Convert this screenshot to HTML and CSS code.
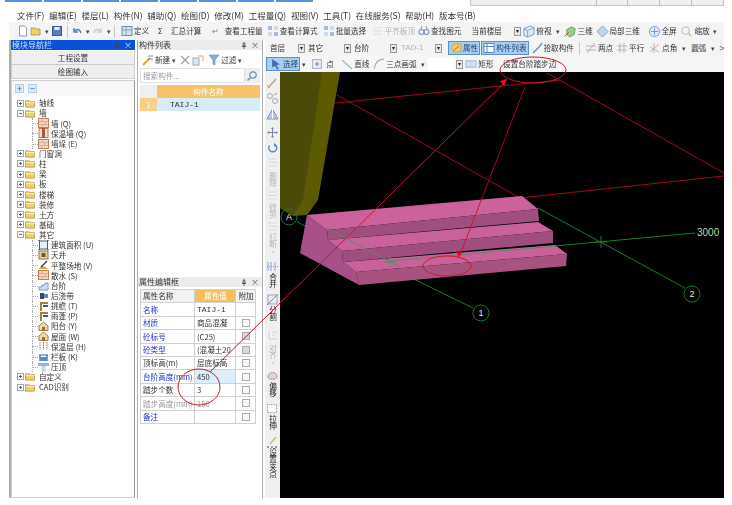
FILE: index.html
```html
<!DOCTYPE html>
<html lang="zh">
<head>
<meta charset="utf-8">
<title>台阶</title>
<link rel="stylesheet" href="styles.css">
</head>
<body>
<svg class="defs" width="0" height="0">
  <symbol id="folder" viewBox="0 0 11 9"><path d="M.5 8.500V1.500h4l1 1h5v6z" fill="#f0cf68" stroke="#9a8440" stroke-width=".7"/><path d="M1 3.500h9.500" stroke="#fff3c0"/></symbol>
  <symbol id="plus" viewBox="0 0 7 7"><rect x=".5" y=".5" width="6" height="6" fill="#fff" stroke="#9aa"/><path d="M2 3.500h3M3.500 2v3" stroke="#666"/></symbol>
  <symbol id="minus" viewBox="0 0 7 7"><rect x=".5" y=".5" width="6" height="6" fill="#fff" stroke="#9aa"/><path d="M2 3.500h3" stroke="#666"/></symbol>
  <symbol id="pin" viewBox="0 0 7 8"><path d="M1 5h5M2.500 1h2v4h-2zM3.500 5v3" fill="none" stroke="#444"/></symbol>
  <symbol id="wall" viewBox="0 0 11 10"><rect x=".5" y=".5" width="10" height="9" fill="#f4d6c0" stroke="#b9825c"/><path d="M1 3.500h9M1 6.500h9M4 1v2M7 4v2M4 7v2" stroke="#d39a78" stroke-width=".7"/></symbol>
  <symbol id="dwall" viewBox="0 0 11 10"><rect x="1" y=".5" width="9" height="9" fill="#f4dccb" stroke="#b9825c"/><rect x="4" y="0" width="3" height="10" fill="#b8563c"/></symbol>
  <symbol id="house" viewBox="0 0 11 10"><path d="M1 5L5.500 1 10 5v4.500H1z" fill="#f2d9a8" stroke="#a07b48"/><path d="M4 9V6h3v3" fill="#8d6c3f"/></symbol>
  <symbol id="eave" viewBox="0 0 11 10"><path d="M3 10V2h7" fill="none" stroke="#a87a48" stroke-width="2"/><path d="M5 4h5v2H5z" fill="#555"/></symbol>
  <symbol id="area" viewBox="0 0 11 10"><rect x="1.500" y="1" width="8" height="8" fill="#e8eef8" stroke="#4a5a78"/><path d="M0 0h2M9 0h2M0 10h2M9 10h2" stroke="#111"/></symbol>
  <symbol id="well" viewBox="0 0 11 10"><rect x="1" y="1" width="9" height="8" fill="#e4d2a8" stroke="#8a7748"/><rect x="3.500" y="3" width="4" height="4" fill="#6b5a2a"/></symbol>
  <symbol id="flat" viewBox="0 0 11 10"><path d="M0 9l5-3 6 3z" fill="#d8a838"/><path d="M3 7l6-6" stroke="#333" stroke-width="1.200"/></symbol>
  <symbol id="stairs" viewBox="0 0 11 10"><path d="M1 9V6h3V4h3V2h3v7z" fill="#cfe0f4" stroke="#6a88b8" stroke-width=".8"/></symbol>
  <symbol id="belt" viewBox="0 0 11 10"><rect x="2" y="2" width="4" height="6" fill="#445"/><rect x="6" y="3" width="4" height="4" fill="#5a88c8"/></symbol>
  <symbol id="rail" viewBox="0 0 11 10"><path d="M1 3h9M2 3v6M9 3v6" stroke="#2c66b0" stroke-width="1.200" fill="none"/><rect x="2" y="5" width="7" height="4" fill="#5c8cc8"/></symbol>
  <symbol id="press" viewBox="0 0 11 10"><rect x="0" y="1" width="11" height="3" fill="#8fb4de"/><rect x="3.500" y="4" width="4" height="6" fill="#c4d8ee"/></symbol>
  <symbol id="hatch" viewBox="0 0 11 10"><path d="M2 1v8M5.500 1v8M9 1v8" stroke="#b06a3a" stroke-dasharray="1.500 1"/></symbol>
  <symbol id="doc" viewBox="0 0 12 12"><path d="M2.500 1h5l2 2v8h-7z" fill="#fff" stroke="#8f9bb0"/></symbol>
  <symbol id="open" viewBox="0 0 12 12"><path d="M1 10V3h4l1 1h4v6z" fill="#eed070" stroke="#a58a3a" stroke-width=".7"/></symbol>
  <symbol id="save" viewBox="0 0 12 12"><rect x="1.500" y="1.500" width="9" height="9" fill="#5a7ec4" stroke="#3b5a98"/><rect x="3.500" y="2" width="5" height="3" fill="#e8eef8"/></symbol>
  <symbol id="undo" viewBox="0 0 12 12"><path d="M3 3v4h4M3 7c2-4 6-3 7 1" fill="none" stroke="#4f7fc8" stroke-width="1.400"/></symbol>
  <symbol id="redo" viewBox="0 0 12 12"><path d="M9 3v4H5M9 7C7 3 3 4 2 8" fill="none" stroke="#c8ccd4" stroke-width="1.400"/></symbol>
  <symbol id="def" viewBox="0 0 12 12"><rect x="1" y="1.500" width="10" height="9" fill="#cfe0f2" stroke="#6f8fb8"/><path d="M1 5h10M5 1.500v9" stroke="#6f8fb8" stroke-width=".7"/></symbol>
  <symbol id="calc" viewBox="0 0 12 12"><rect x="1" y="1" width="4" height="4" fill="#a4bcdc"/><rect x="7" y="1" width="4" height="4" fill="#d0dae6"/><rect x="1" y="7" width="4" height="4" fill="#d0dae6"/><rect x="7" y="7" width="4" height="4" fill="#a4bcdc"/></symbol>
  <symbol id="find" viewBox="0 0 12 12"><circle cx="3.500" cy="7" r="2.500" fill="none" stroke="#6f92c4" stroke-width="1.100"/><circle cx="8.500" cy="7" r="2.500" fill="none" stroke="#6f92c4" stroke-width="1.100"/><path d="M3 4l1-3M9 4L8 1" stroke="#999"/></symbol>
  <symbol id="box" viewBox="0 0 14 14"><path d="M2 4l7-3 4 2v7l-7 3-4-2z" fill="#dbe8f6" stroke="#6f94c6"/><path d="M2 4l4 2v7M6 6l7-3" fill="none" stroke="#6f94c6" stroke-width=".8"/></symbol>
  <symbol id="cube" viewBox="0 0 14 14"><path d="M3 5l5-3 4 2-1 6-5 3-3-3z" fill="#9ccf8c" stroke="#5fa05f"/><path d="M1 12l4-4" stroke="#c83a3a"/></symbol>
  <symbol id="gem" viewBox="0 0 14 14"><path d="M7 1l6 6-6 6-6-6z" fill="#c0d4ec" stroke="#7f9fca"/></symbol>
  <symbol id="globe" viewBox="0 0 14 14"><circle cx="7" cy="7" r="5.500" fill="#e0eaf8" stroke="#7396c8"/><path d="M7 3v8M3 7h8" stroke="#7396c8"/></symbol>
  <symbol id="zoom" viewBox="0 0 14 14"><circle cx="6" cy="6" r="4" fill="none" stroke="#b4c8e0" stroke-width="1.300"/><path d="M9 9l3 3" stroke="#dcb458" stroke-width="1.500"/></symbol>
  <symbol id="prop" viewBox="0 0 12 12"><path d="M1 6l3-4h7v8H4z" fill="#f0d060" stroke="#b99a30" stroke-width=".7"/><path d="M3 9l6-5" stroke="#d0602a"/></symbol>
  <symbol id="list" viewBox="0 0 12 12"><rect x="1" y="1.500" width="10" height="9" fill="#fff" stroke="#5c86be"/><path d="M1 4.500h10M4 2v8" stroke="#5c86be"/></symbol>
  <symbol id="pick" viewBox="0 0 12 12"><path d="M2 11l7-7 2-3" stroke="#7396c8" stroke-width="1.600" fill="none"/></symbol>
  <symbol id="two" viewBox="0 0 12 12"><path d="M2 11L10 1M1 4h10M1 8h10" stroke="#c8aaaa" fill="none"/></symbol>
  <symbol id="para" viewBox="0 0 12 12"><path d="M1 4h10M1 8h10M4 1v10M8 1v10" stroke="#d8aaaa" fill="none"/></symbol>
  <symbol id="angle" viewBox="0 0 12 12"><path d="M1 10L10 2M1 5l9 5M5 1v10" stroke="#c8aabc" fill="none"/></symbol>
  <symbol id="sel" viewBox="0 0 11 11"><path d="M2 1l7 5-3 .5 2 3.500-1.500 .5-2-3.500L2 9z" fill="#3a6ab0"/></symbol>
  <symbol id="pt" viewBox="0 0 11 11"><rect x="1.500" y="1.500" width="8" height="8" fill="#eef2f8" stroke="#aab2c0"/><rect x="4" y="4" width="3" height="3" fill="#8aa0c4"/></symbol>
  <symbol id="ln" viewBox="0 0 11 11"><path d="M1 2l9 8" stroke="#90a6c6"/></symbol>
  <symbol id="arc" viewBox="0 0 11 11"><path d="M1 10C2 4 5 1 10 1" fill="none" stroke="#cc9a9a"/></symbol>
  <symbol id="rect" viewBox="0 0 13 11"><rect x="1" y="2" width="11" height="7" fill="#d0e0f4" stroke="#9ab6da"/></symbol>
  <symbol id="newi" viewBox="0 0 12 12"><path d="M1 11l7-7" stroke="#d9a93a" stroke-width="2"/><path d="M6 2h5M6 5h5" stroke="#88a"/></symbol>
  <symbol id="cross" viewBox="0 0 12 12"><path d="M2 2l8 8M10 2l-8 8" stroke="#9aa0a8" stroke-width="1.200"/></symbol>
  <symbol id="copy" viewBox="0 0 12 12"><rect x="1" y="4" width="6" height="7" fill="#dde6f2" stroke="#9ab"/><path d="M6 2h5v5" fill="none" stroke="#e0a878"/></symbol>
  <symbol id="funnel" viewBox="0 0 12 12"><path d="M1 1h10L7 6v5L5 10V6z" fill="#7fb2e0" stroke="#5c92c8" stroke-width=".6"/></symbol>
  <symbol id="search" viewBox="0 0 12 12"><circle cx="7" cy="5" r="3.200" fill="none" stroke="#5f96c4" stroke-width="1.200"/><path d="M4.500 7.500L1.500 10.500" stroke="#5f96c4" stroke-width="1.400"/></symbol>
  <symbol id="v1" viewBox="0 0 13 13"><path d="M2 11L10 2" stroke="#a8ac94" stroke-width="1.600"/><path d="M1 8l3 3" stroke="#c8a860"/></symbol>
  <symbol id="v2" viewBox="0 0 13 13"><circle cx="4" cy="4" r="2.500" fill="none" stroke="#a0aaba"/><circle cx="9" cy="9" r="2.500" fill="none" stroke="#a0aaba"/><path d="M8 3l3-2" stroke="#b08080"/></symbol>
  <symbol id="v3" viewBox="0 0 13 13"><path d="M6.500 1L12 11H1z" fill="#b8c8e0" stroke="#7c94ba"/><path d="M6.500 1v10" stroke="#fff"/></symbol>
  <symbol id="v4" viewBox="0 0 13 13"><path d="M6.500 2v9M2 6.500h9" stroke="#7388a6"/><path d="M6.500 1l-1.500 2h3zM6.500 12l-1.500-2h3zM1 6.500l2-1.500v3zM12 6.500l-2-1.500v3z" fill="#7388a6"/></symbol>
  <symbol id="v5" viewBox="0 0 13 13"><path d="M3.500 4.500a4 4 0 1 0 5.500-1" fill="none" stroke="#5c88c4" stroke-width="1.400"/><path d="M8 1.500v4h3z" fill="#5c88c4"/></symbol>
  <symbol id="v6" viewBox="0 0 13 13"><path d="M2 3h9M2 6.500h9M2 10h9" stroke="#d8dadc"/></symbol>
  <symbol id="v7" viewBox="0 0 13 13"><path d="M2 2v9M5 2v9M9 2v9" stroke="#86a4cc"/><path d="M1 6.500h11" stroke="#86a4cc" stroke-dasharray="1 1"/></symbol>
  <symbol id="v8" viewBox="0 0 13 13"><rect x="2" y="2" width="9" height="9" fill="#eaeff7" stroke="#93a3c6"/><path d="M1 12L12 1" stroke="#a08090"/></symbol>
  <symbol id="v9" viewBox="0 0 13 13"><path d="M3 2v9h8M6 4h5M6 7h3" stroke="#cfd2d6" fill="none"/></symbol>
  <symbol id="v10" viewBox="0 0 13 13"><path d="M2 8a4.500 4.500 0 1 1 9 0c0 3-9 3-9 0z" fill="#e2d4de" stroke="#b090a4"/></symbol>
  <symbol id="v11" viewBox="0 0 13 13"><rect x="1.500" y="2.500" width="9" height="8" fill="#fff" stroke="#a0aaba" stroke-dasharray="2 1"/></symbol>
  <symbol id="v12" viewBox="0 0 13 13"><path d="M4 9L10 2" stroke="#d9b87a" stroke-width="1.600"/><path d="M1 12h2M5 12h2M9 12h2" stroke="#444"/></symbol>
</svg>

<div class="linkstrip">
  <div class="links"><i></i><i></i><i></i><i></i><i></i><i></i><i></i><i></i></div>
  <div class="tabs"><span class="tab-wide"></span><span></span><span></span><span></span><span></span></div>
</div>

<div class="app">
  <nav class="menubar">
    <span>文件(F)</span><span>编辑(E)</span><span>楼层(L)</span><span>构件(N)</span><span>辅助(Q)</span><span>绘图(D)</span><span>修改(M)</span><span>工程量(Q)</span><span>视图(V)</span><span>工具(T)</span><span>在线服务(S)</span><span>帮助(H)</span><span>版本号(B)</span>
  </nav>

  <div class="toolbar tb1">
    <svg class="ic"><use href="#doc"/></svg>
    <svg class="ic"><use href="#open"/></svg><b class="drop">▾</b>
    <svg class="ic"><use href="#save"/></svg>
    <u class="sep sep-a"></u>
    <svg class="ic"><use href="#undo"/></svg><b class="drop">▾</b>
    <svg class="ic"><use href="#redo"/></svg><b class="drop">▾</b>
    <u class="sep sep-b"></u>
    <svg class="ic"><use href="#def"/></svg><span>定义</span>
    <span class="t-sum"><em class="lead">Σ</em>汇总计算</span>
    <span class="t-view"><em class="lead back">↵</em>查看工程量</span>
    <svg class="ic t-a"><use href="#calc"/></svg><span>查看计算式</span>
    <svg class="ic t-b"><use href="#calc"/></svg><span>批量选择</span>
    <svg class="ic t-c"><use href="#v6"/></svg><span class="off">平齐板顶</span>
    <svg class="ic t-d"><use href="#find"/></svg><span>查找图元</span>
    <span class="t-floor">当前楼层</span><span class="sel-btn t-e">▾</span>
    <svg class="ic14 t-h"><use href="#box"/></svg><span>俯视</span><b class="drop d-a">▾</b>
    <svg class="ic14 t-i"><use href="#cube"/></svg><span>三维</span>
    <svg class="ic14 t-j"><use href="#gem"/></svg><span>局部三维</span>
    <svg class="ic14 t-k"><use href="#globe"/></svg><span>全屏</span>
    <svg class="ic14 t-l"><use href="#zoom"/></svg><span>缩放</span><b class="drop d-b">▾</b>
  </div>

  <div class="workspace">
    <aside class="nav-panel">
      <header class="panel-title active"><span>模块导航栏</span><span class="pin"><svg class="pin-ic"><use href="#pin"/></svg>×</span></header>
      <div class="nav-btn first">工程设置</div>
      <div class="nav-btn">绘图输入</div>
      <div class="treebox">
        <div class="treetools"><span class="tt">+</span><span class="tt">−</span></div>
        <ul class="tree">
          <li><svg class="ex"><use href="#plus"/></svg><svg class="fd"><use href="#folder"/></svg>轴线</li>
          <li><svg class="ex"><use href="#minus"/></svg><svg class="fd"><use href="#folder"/></svg>墙</li>
          <li class="leaf"><svg class="lf"><use href="#wall"/></svg>墙 (Q)</li>
          <li class="leaf"><svg class="lf"><use href="#dwall"/></svg>保温墙 (Q)</li>
          <li class="leaf"><svg class="lf"><use href="#wall"/></svg>墙垛 (E)</li>
          <li><svg class="ex"><use href="#plus"/></svg><svg class="fd"><use href="#folder"/></svg>门窗洞</li>
          <li><svg class="ex"><use href="#plus"/></svg><svg class="fd"><use href="#folder"/></svg>柱</li>
          <li><svg class="ex"><use href="#plus"/></svg><svg class="fd"><use href="#folder"/></svg>梁</li>
          <li><svg class="ex"><use href="#plus"/></svg><svg class="fd"><use href="#folder"/></svg>板</li>
          <li><svg class="ex"><use href="#plus"/></svg><svg class="fd"><use href="#folder"/></svg>楼梯</li>
          <li><svg class="ex"><use href="#plus"/></svg><svg class="fd"><use href="#folder"/></svg>装修</li>
          <li><svg class="ex"><use href="#plus"/></svg><svg class="fd"><use href="#folder"/></svg>土方</li>
          <li><svg class="ex"><use href="#plus"/></svg><svg class="fd"><use href="#folder"/></svg>基础</li>
          <li><svg class="ex"><use href="#minus"/></svg><svg class="fd"><use href="#folder"/></svg>其它</li>
          <li class="leaf"><svg class="lf"><use href="#area"/></svg>建筑面积 (U)</li>
          <li class="leaf"><svg class="lf"><use href="#well"/></svg>天井</li>
          <li class="leaf"><svg class="lf"><use href="#flat"/></svg>平整场地 (V)</li>
          <li class="leaf"><svg class="lf"><use href="#wall"/></svg>散水 (S)</li>
          <li class="leaf"><svg class="lf"><use href="#stairs"/></svg>台阶</li>
          <li class="leaf"><svg class="lf"><use href="#belt"/></svg>后浇带</li>
          <li class="leaf"><svg class="lf"><use href="#eave"/></svg>挑檐 (T)</li>
          <li class="leaf"><svg class="lf"><use href="#eave"/></svg>雨蓬 (P)</li>
          <li class="leaf"><svg class="lf"><use href="#house"/></svg>阳台 (Y)</li>
          <li class="leaf"><svg class="lf"><use href="#house"/></svg>屋面 (W)</li>
          <li class="leaf"><svg class="lf"><use href="#hatch"/></svg>保温层 (H)</li>
          <li class="leaf"><svg class="lf"><use href="#rail"/></svg>栏板 (K)</li>
          <li class="leaf"><svg class="lf"><use href="#press"/></svg>压顶</li>
          <li><svg class="ex"><use href="#plus"/></svg><svg class="fd"><use href="#folder"/></svg>自定义</li>
          <li><svg class="ex"><use href="#plus"/></svg><svg class="fd"><use href="#folder"/></svg>CAD识别</li>
        </ul>
      </div>
    </aside>

    <section class="mid">
      <div class="list-panel">
        <header class="panel-title"><span>构件列表</span><span class="pin"><svg class="pin-ic"><use href="#pin"/></svg>×</span></header>
        <div class="list-tools">
          <svg class="ic"><use href="#newi"/></svg><span>新建</span><b class="drop">▾</b>
          <svg class="ic l-a"><use href="#cross"/></svg>
          <svg class="ic"><use href="#copy"/></svg>
          <svg class="ic l-b"><use href="#funnel"/></svg><span>过滤</span><b class="drop">▾</b>
        </div>
        <div class="searchbar"><span class="search-input">搜索构件...</span><span class="search-go"><svg class="ic"><use href="#search"/></svg></span></div>
        <div class="comp-head"><span class="idx"></span><span class="name">构件名称</span></div>
        <div class="comp-row"><span class="idx">1</span><span class="name mono">TAIJ-1</span></div>
      </div>
      <div class="prop-panel">
        <header class="panel-title"><span>属性编辑框</span><span class="pin"><svg class="pin-ic"><use href="#pin"/></svg>×</span></header>
        <table class="props">
          <tr><th>属性名称</th><th class="hl">属性值</th><th>附加</th></tr>
          <tr><td class="blue">名称</td><td class="mono">TAIJ-1</td><td></td></tr>
          <tr><td class="blue">材质</td><td>商品混凝</td><td><i class="cb"></i></td></tr>
          <tr><td class="blue">砼标号</td><td>(C25)</td><td><i class="cb on"></i></td></tr>
          <tr><td class="blue">砼类型</td><td>(混凝土20</td><td><i class="cb on"></i></td></tr>
          <tr><td>顶标高(m)</td><td>层底标高</td><td><i class="cb"></i></td></tr>
          <tr class="cur"><td class="blue">台阶高度(mm)</td><td>450</td><td><i class="cb"></i></td></tr>
          <tr><td>踏步个数</td><td>3</td><td><i class="cb"></i></td></tr>
          <tr class="dim"><td>踏步高度(mm)</td><td>150</td><td><i class="cb"></i></td></tr>
          <tr><td class="blue">备注</td><td></td><td><i class="cb"></i></td></tr>
        </table>
      </div>
    </section>

    <section class="main">
      <div class="toolbar tb2">
        <span>首层</span><span class="sel-btn s-a">▾</span>
        <span class="s-gap">其它</span><span class="sel-btn s-b">▾</span>
        <span class="s-gap">台阶</span><span class="sel-btn s-b">▾</span>
        <span class="s-tad off">TAD-1</span><span class="sel-btn s-d">▾</span>
        <span class="pressed"><svg class="ic"><use href="#prop"/></svg>属性</span>
        <span class="pressed s-p"><svg class="ic"><use href="#list"/></svg>构件列表</span>
        <svg class="ic s-e"><use href="#pick"/></svg><span>拾取构件</span>
        <u class="sep s-f"></u>
        <svg class="ic"><use href="#two"/></svg><span>两点</span>
        <svg class="ic s-g"><use href="#para"/></svg><span>平行</span>
        <svg class="ic s-i"><use href="#angle"/></svg><span>点角</span><b class="drop s-j">▾</b>
        <span class="s-j">圆弧</span><b class="drop s-j">▾</b>
        <span class="more">&gt;</span>
      </div>
      <div class="toolbar tb3">
        <span class="pressed p-sel"><svg class="ic"><use href="#sel"/></svg>选择</span><b class="drop">▾</b>
        <svg class="ic r-a"><use href="#pt"/></svg><span>点</span>
        <svg class="ic r-b"><use href="#ln"/></svg><span>直线</span>
        <svg class="ic r-c"><use href="#arc"/></svg><span>三点画弧</span><b class="drop d-c">▾</b>
        <span class="blank"></span><span class="sel-btn r-s">▾</span>
        <svg class="ic r-d"><use href="#rect"/></svg><span>矩形</span>
        <span class="r-e">设置台阶踏步边</span>
      </div>
      <div class="stage">
        <div class="vtools">
          <svg class="vi"><use href="#v1"/></svg>
          <svg class="vi mt2"><use href="#v2"/></svg>
          <svg class="vi mt3"><use href="#v3"/></svg>
          <svg class="vi mt5"><use href="#v4"/></svg>
          <svg class="vi mt2"><use href="#v5"/></svg>
          <svg class="vi mt2"><use href="#v6"/></svg><span class="vt off mt3">删除</span>
          <svg class="vi mt2"><use href="#v6"/></svg><span class="vt off mt1">修剪</span>
          <svg class="vi mt2"><use href="#v6"/></svg><span class="vt off">打断·</span>
          <svg class="vi mt4"><use href="#v7"/></svg><span class="vt">合并</span>
          <svg class="vi mt5"><use href="#v8"/></svg><span class="vt">分割</span>
          <svg class="vi mt6"><use href="#v9"/></svg><span class="vt off mt3">对齐·</span>
          <svg class="vi mt3"><use href="#v10"/></svg><span class="vt">偏移</span>
          <svg class="vi mt4"><use href="#v11"/></svg><span class="vt">拉伸</span>
          <svg class="vi mt5"><use href="#v12"/></svg><span class="vt">设置夹点</span>
        </div>
        <svg class="canvas" viewBox="280 72 444 426" preserveAspectRatio="none">
          <rect x="280" y="72" width="444" height="426" fill="#000"/>
          <polygon points="280,72 340,72 318,200 307,215 293,216 280,208" fill="#5c5a02"/>
          <polygon points="280,72 322,72 303,200 293,216 280,208" fill="#4c4a08"/>
          <g fill="none" stroke="#1d7a2a">
            <path d="M297 222L473 308M538 208L685 288M555 246L695 233M601 236v12M595 242h12"/>
            <circle cx="289" cy="217" r="8"/><circle cx="481" cy="313" r="8"/><circle cx="692" cy="294" r="8"/>
          </g>
          <path d="M337 95L520 198L724 176M335 103L560 80M547 73L724 173M525 87L482 198" stroke="#a80818" fill="none"/>
          <polygon points="307,215 300,253 359,285 356,272 343,262 342,251 328,240 327,230" fill="#a85088"/>
          <polygon points="307,215 522,196 538,209 327,230" fill="#cb629c"/>
          <polygon points="327,230 538,209 539,221 328,240" fill="#a04e7e"/>
          <polygon points="328,240 538,222 553,231 342,251" fill="#c9619a"/>
          <polygon points="342,251 553,231 553,243 343,262" fill="#a04e7e"/>
          <polygon points="343,262 555,245 567,254 356,272" fill="#c9619a"/>
          <polygon points="356,272 567,254 566,266 359,285" fill="#a8527f"/>
          <path d="M327 228L400 267M390 261L556 246M390 256v12M384 262h12" stroke="#5f8a68" fill="none"/>
          <g fill="#e8e8e8" font-family="'Liberation Sans',sans-serif" font-size="9" text-anchor="middle">
            <text x="289" y="220">A</text><text x="481" y="316">1</text><text x="692" y="297">2</text>
          </g>
          <text x="697" y="236" fill="#bcd8a0" font-size="10" font-family="'Liberation Sans',sans-serif">3000</text>
        </svg>
      </div>
    </section>
  </div>
</div>

<svg class="notes" viewBox="0 0 732 505">
  <g fill="none" stroke="#cc1828">
    <ellipse cx="533" cy="70" rx="33" ry="13"/>
    <ellipse cx="447" cy="266" rx="24" ry="10"/>
    <ellipse cx="199" cy="387" rx="21" ry="18"/>
    <path d="M210 372L505 82M482 198L460 255"/>
  </g>
  <path d="M507 79l-7 2 4 5zM459 258l-3-6 6 1z" fill="#f01020"/>
</svg>
</body>
</html>
```
FILE: styles.css
```css
* { box-sizing: border-box; }
html, body { margin: 0; padding: 0; }
body {
  width: 732px;
  height: 505px;
  overflow: hidden;
  position: relative;
  background: #fff;
  color: #333;
  font: 7.6px/1 "Noto Sans CJK SC", "Liberation Sans", sans-serif;
}
.defs { position: absolute; }
ul { list-style: none; margin: 0; padding: 0; }
em { font-style: normal; }
b { font-weight: normal; }
u { text-decoration: none; }

.linkstrip { height: 8px; display: flex; justify-content: space-between; padding: 0 8px 0 5px; }
.links { display: flex; gap: 2px; height: 2px; width: 308px; }
.links i { flex: 1; background: #5a8fe0; }
.tabs { display: flex; width: 254px; height: 6px; background: #efefef; border: 1px solid #c4c4c4; border-top: 0; }
.tabs span { width: 32px; border-left: 1px solid #c4c4c4; }
.tabs .tab-wide { width: 125px; border-left: 0; }

.app { width: 724px; height: 490px; display: flex; flex-direction: column; filter: blur(.35px); }
.menubar { height: 14px; padding-left: 17px; display: flex; align-items: center; gap: 4.7px; white-space: nowrap; font-size: 8.5px; }

.toolbar { display: flex; align-items: center; white-space: nowrap; background: #f4f4f4; overflow: hidden; }
.toolbar > span, .toolbar > b { flex: none; }
.tb1 { height: 18px; margin-left: 9px; padding-left: 8px; }
.tb2, .tb3 { height: 16px; }
.tb2 { padding-left: 5px; }
.tb3 { padding-left: 1px; background: #f6f6f6; }
.ic { width: 12px; height: 12px; flex: none; margin-right: 1px; }
.ic14 { width: 13px; height: 13px; flex: none; margin-right: 1px; }
.drop { color: #444; font-size: 7px; width: 8px; text-align: center; flex: none; }
.sep { width: 1px; height: 13px; background: #c8c8c8; flex: none; }
.sep-a { margin: 0 3px; }
.sep-b { margin: 0 6px 0 1px; }
.off { color: #b4b4b4; }
.lead { display: inline-block; width: 13px; }
.back { color: #6a7f9a; }
.t-sum { margin-left: 8.8px; }
.t-view { margin-left: 10.4px; }
.t-a { margin-left: 4px; }
.t-b { margin-left: 5px; }
.t-c { margin-left: 5.6px; }
.t-d { margin-left: 3px; }
.t-floor { margin-left: 10.2px; }
.t-e { margin-left: 12.4px; }
.t-h { margin-left: 1px; }
.d-a { margin-left: 2px; }
.t-i { margin-left: 2px; }
.t-j { margin-left: 2.8px; }
.t-k { margin-left: 7.6px; }
.t-l { margin-left: 3.8px; }
.d-b { margin-left: 1px; }
.sel-btn {
  width: 7px; height: 9px; flex: none;
  border: 1px solid #999; background: #e8e8e8;
  font-size: 6px; line-height: 6px; text-align: center; color: #222;
}

.workspace { flex: 1; display: flex; min-height: 0; padding-left: 9px; }
.panel-title {
  height: 10px; display: flex; justify-content: space-between; align-items: center;
  background: #ececec; padding: 0 3px 0 1px; flex: none; font-size: 8px;
}
.panel-title.active { background: #0b50d8; color: #cfe0ff; }
.pin { display: flex; align-items: center; gap: 4px; color: #555; }
.pin-ic { width: 6px; height: 7px; }
.active .pin { color: #cfe0ff; }

.nav-panel { width: 126px; border-left: 2px solid #aeaeae; display: flex; flex-direction: column; }
.nav-btn {
  height: 14px; display: flex; align-items: center; justify-content: center;
  background: #efefef; border: 1px solid #cdcdcd; border-top: 0;
}
.nav-btn.first { margin-top: 1px; }
.treebox { flex: 1; margin-top: 1px; border: 1px solid #cfcfcf; border-right-color: #999; min-height: 0; }
.treetools { height: 15px; display: flex; gap: 4px; padding: 3px 0 0 3px; background: #f7f7f7; }
.tt {
  width: 9px; height: 9px; display: flex; align-items: center; justify-content: center;
  background: #dbe8f7; color: #2f69b2; border: 1px solid #b9cfe8; font-size: 9px;
}
.tree { padding-top: 2px; }
.tree li { height: 10.15px; display: flex; align-items: center; padding-left: 5px; white-space: nowrap; }
.tree .leaf { padding-left: 26px; position: relative; }
.tree .leaf::before { content: ""; position: absolute; left: 20px; top: 0; bottom: 0; border-left: 1px dotted #aaa; }
.tree .leaf::after { content: ""; position: absolute; left: 20px; top: 5px; width: 6px; border-top: 1px dotted #aaa; }
.ex { width: 7px; height: 7px; margin-right: 1px; flex: none; }
.fd { width: 10px; height: 9px; margin-right: 4px; flex: none; }
.lf { width: 11px; height: 10px; margin-right: 2px; flex: none; position: relative; z-index: 1; }

.mid { width: 126px; margin-left: 2px; display: flex; flex-direction: column; border-left: 1px solid #aeaeae; border-right: 1px solid #aeaeae; }
.list-panel { height: 237px; flex: none; }
.list-tools { height: 16px; margin-top: 2px; display: flex; align-items: center; padding-left: 4px; }
.l-a { margin-left: 1px; }
.l-b { margin-left: 3px; }
.searchbar, .comp-head, .comp-row { margin-left: 2px; margin-right: 2px; }
.searchbar { height: 15px; display: flex; margin-bottom: 2px; }
.search-input { flex: 1; background: #fff; border: 1px solid #e0e0e0; color: #999; padding: 3px 0 0 2px; }
.search-go { width: 15px; background: #eee; display: flex; align-items: center; justify-content: center; }
.comp-head, .comp-row { display: flex; height: 13px; align-items: center; }
.idx { width: 17px; height: 100%; background: #efefef; text-align: center; line-height: 13px; flex: none; }
.name { flex: 1; text-align: center; }
.comp-head .name { background: #f6c36c; color: #fff; height: 100%; line-height: 13px; }
.comp-row { background: #d6ecf8; }
.comp-row .idx { background: #f9cf85; color: #fff; }
.comp-row .name { text-align: left; padding-left: 13px; }
.mono { font-family: "Liberation Mono", monospace; font-size: 8px; }

.prop-panel { flex: 1; min-height: 0; }
.props { border-collapse: collapse; margin: 2px 0 0 2px; table-layout: fixed; width: 115px; }
.props th, .props td { border: 1px solid #d0d0d0; height: 13.4px; padding: 0 1px 0 2px; text-align: left; font-weight: normal; white-space: nowrap; overflow: hidden; }
.props th { background: #f2f2f2; }
.props tr > :nth-child(1) { width: 54px; }
.props tr > :nth-child(2) { width: 41px; }
.props tr > :nth-child(3) { width: 20px; text-align: center; }
.props .hl { background: #f4bf63; color: #fff; text-align: center; }
.blue { color: #1a2fcf; }
.cur td:nth-child(2) { background: #dcedfb; }
.dim td { color: #999; }
.cb { display: block; margin: 0 auto; width: 8px; height: 8px; background: #f8f8f8; border: 1px solid #aaa; }
.cb.on { background: #d8d8d8; }

.main { flex: 1; min-width: 0; display: flex; flex-direction: column; margin-left: 2px; }
.s-a { margin-left: 12.8px; }
.s-gap { margin-left: 3px; }
.s-b { margin-left: 20.8px; }
.s-tad { margin-left: 4px; width: 22px; font: 8px/1 "Liberation Sans", sans-serif; }
.s-d { margin-left: 12px; margin-right: 6px; }
.pressed { display: flex; align-items: center; height: 14px; background: #a9cdf2; border: 1px solid #5f8fc7; padding: 0 1px; color: #1f3a5f; }
.s-p { margin-left: 1px; }
.s-e { margin-left: 2px; }
.s-f { margin: 0 5px; }
.s-g { margin-left: 3px; }
.s-i { margin-left: 4.8px; }
.s-j { margin-left: 3px; }
.more { margin-left: 2px; font-size: 10px; color: #555; }
.p-sel { padding-left: 3px; }
.r-a { margin-left: 3px; margin-right: 3px; }
.r-b { margin-left: 7.4px; }
.r-c { margin-left: 3.8px; }
.d-c { margin-left: 2.6px; }
.blank { width: 26px; height: 13px; background: #fff; margin-left: 1px; }
.r-s { margin-left: 2px; }
.r-d { margin-left: 2px; margin-right: 1px; }
.r-e { margin-left: 9.8px; }

.stage { flex: 1; min-height: 0; display: flex; }
.vtools { width: 15px; flex: none; background: #f0f0f0; display: flex; flex-direction: column; align-items: center; padding-top: 5px; overflow: hidden; color: #222; }
.vi { width: 13px; height: 13px; flex: none; }
.mt1 { margin-top: 1px; }
.mt2 { margin-top: 2px; }
.mt3 { margin-top: 3px; }
.mt4 { margin-top: 4px; }
.mt5 { margin-top: 5px; }
.mt6 { margin-top: 6px; }
.vt { writing-mode: vertical-rl; text-orientation: mixed; line-height: 12px; white-space: nowrap; flex: none; }
.canvas { flex: 1; height: 100%; display: block; min-width: 0; }

.notes { position: absolute; left: 0; top: 0; width: 732px; height: 505px; pointer-events: none; }
```
